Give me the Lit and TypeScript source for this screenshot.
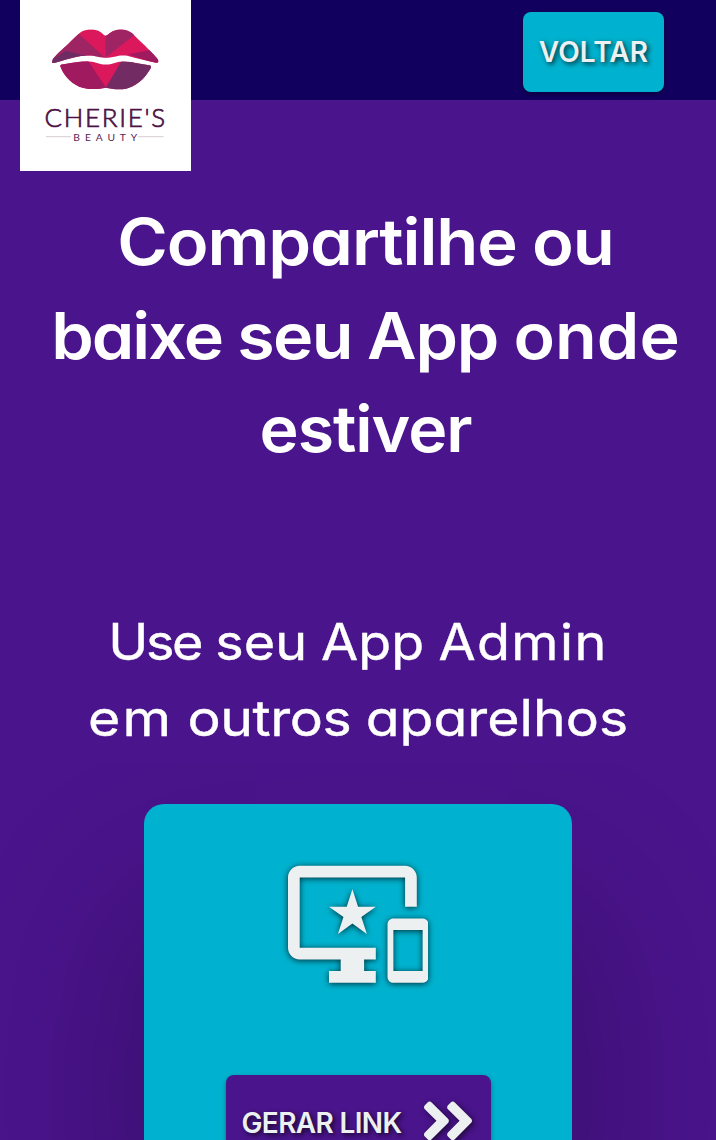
import { LitElement, html, css, svg } from "lit";
import { customElement } from "lit/decorators.js";

@customElement("brand-logo")
class BrandLogo extends LitElement {
  static styles = css`
    :host { display: block; background: #fff; }
    .art { display: block; width: 100%; height: 100%; }
    .name { font: 300 26px Lato, sans-serif; fill: #4d1245; stroke: #4d1245; stroke-width: .7px; }
    .tag { font: 400 10.3px Lato, sans-serif; fill: #5b2455; }
  `;
  render() {
    const facets = svg`
      <g clip-path="url(#upper)">
        <rect x="30" y="28" width="110" height="36" fill="#dc185c"/>
        <path d="M28 66L30 50L47 49.5L64 55L85 58L75 66Z" fill="#6f2c63"/>
        <path d="M28 62L58.500 33.500L85 57.500L63 55L46 50.500Z" fill="#9f2463"/>
        <path d="M85.300 35L100 26L120 30L112.500 36L85.300 57.500Z" fill="#9f2463"/>
        <path d="M108 54L132 49.500L142 66Z" fill="#a01a60"/>
      </g>
      <g clip-path="url(#lower)">
        <rect x="36" y="58" width="100" height="34" fill="#dc185c"/>
        <path d="M36 60L67.500 60L86 87.500L78 94H36Z" fill="#a01a60"/>
        <path d="M103 58L85.500 87.500L94 94H138V58Z" fill="#732c63"/>
      </g>`;
    return html`
      <svg class="art" viewBox="0 0 171 171">
        <defs>
          <clipPath id="upper">
            <path d="M32 60.500C33 57 40 51 46 45.500C52 40 57 34 62 31C67 28.500 75 28.500 79 31C82 32.500 83 35 85.300 35.500C88 35 90 32 94 30.500C100 28 107 29 112 33C120 41 130 50 136 57C139 60 139 62.500 136 62.500C127 61 117 58 107 55.500C99 54 94 57.500 85.300 57.500C77 57.500 75 54.500 65 55.500C54 56 43 60.500 34 62.800C31.500 63 31.500 62 32 60.500Z"/>
          </clipPath>
          <clipPath id="lower">
            <path d="M40 66C39.500 64.500 42 64 45 63.800C54 62.500 62 60.500 70 61.200C77 62 80 65 88 64.200C94 63.500 97 61 104 61.200C113 61.500 121 64 129 65C132 65.500 131 67 130 69C124 79 116 86 106 88.500C98 90 91 88.500 85.500 87.500C78 89 68 90 59 86.500C49 82 43 74 40 66Z"/>
          </clipPath>
        </defs>
        <g transform="translate(.4 .4)">${facets}</g>
        <text class="name" x="24.500" y="127.300" textLength="121">CHERIE'S</text>
        <text class="tag" x="53.500" y="141" textLength="64">BEAUTY</text>
        <path d="M26 137H51M118.500 137H144" stroke="#ddd5dc" stroke-width="1.300"/>
      </svg>`;
  }
}

@customElement("app-root")
class AppRoot extends LitElement {
  static styles = css`
    :host {
      display: block; height: 1140px; overflow: hidden; background: #4a148c;
      color: #fff; font-family: Inter, sans-serif; font-feature-settings: "cv11";
    }
    * { box-sizing: border-box; }
    .bar {
      position: relative; height: 100px; background: #12005e;
      display: flex; justify-content: flex-end; padding: 12px 52px 0 0;
    }
    .logo { position: absolute; left: 20px; top: 0; width: 170.600px; height: 170.600px; }
    .btn {
      display: flex; align-items: center; border: 0; border-radius: 8px; color: #ecf0f1;
      font: 600 28px Inter, sans-serif; text-shadow: 2px 2px 5px rgba(0,0,0,.75);
      box-shadow: 0 2px 5px rgba(0,0,0,.35); white-space: nowrap; margin: 0;
    }
    .back { width: 141px; height: 80px; padding: 0; justify-content: center; background: #00b2cf; }
    .back span { letter-spacing: .1px; }
    .title {
      margin: 95px 0 0 15px; text-align: center; font-size: 64px; font-weight: 600;
      line-height: 93.500px;
    }
    .line { display: block; white-space: nowrap; letter-spacing: -1px; word-spacing: -1px; }
    .t1 { transform: scaleX(1.073); }
    .t2 { transform: scaleX(1.065); }
    .t3 { transform: scaleX(1.034); }
    .baixe { letter-spacing: -1.800px; }
    .seu { letter-spacing: -1.500px; }
    .onde { letter-spacing: .1px; }
    .sub { margin: 128px 0 0; text-align: center; font-weight: 400; font-size: 50px; line-height: 76.500px; -webkit-text-stroke: .4px #fff; }
    .sub .line { letter-spacing: 0; }
    .use { letter-spacing: -2.200px; }
    .admin { letter-spacing: 1.300px; }
    .em { letter-spacing: 2px; }
    .outros { letter-spacing: -.4px; }
    .s1 { transform: scaleX(1.078); }
    .s2 { transform: scaleX(1.107); }
    .card {
      width: 428px; height: 560px; margin: 47px auto 0; padding-top: 50.500px; background: #00b2cf;
      border-radius: 20px; box-shadow: 0 110px 175px rgba(0,0,0,.32);
      display: flex; flex-direction: column; align-items: center;
    }
    .devices { display: block; width: 140.500px; height: 140.500px; filter: drop-shadow(0 1px 3px rgba(0,0,0,.75)); }
    .go { margin-top: 80px; width: 265px; height: 92px; padding: 0 16px; justify-content: space-between; background: #4a148c; }
    .go span { padding-top: 5px; letter-spacing: -.65px; }
    .chev { width: 54px; height: 61.700px; filter: drop-shadow(2px 2px 3px rgba(0,0,0,.6)); }
  `;
  render() {
    return html`
      <header class="bar">
        <brand-logo class="logo"></brand-logo>
        <button class="btn back"><span>VOLTAR</span></button>
      </header>
      <h1 class="title">
        <span class="line t1">Compartilhe ou</span>
        <span class="line t2"><span class="baixe">baixe</span> <span class="seu">seu</span> App <span class="onde">onde</span></span>
        <span class="line t3">estiver</span>
      </h1>
      <h2 class="sub">
        <span class="line s1"><span class="use">Use</span> seu App <span class="admin">Admin</span></span>
        <span class="line s2"><span class="em">em</span> <span class="outros">outros</span> aparelhos</span>
      </h2>
      <section class="card">
        <svg class="devices" viewBox="0 0 24 24" fill="#ecf0f1">
          <path d="M23 11.010L18 11c-.55 0-1 .45-1 1v9c0 .55.45 1 1 1h5c.55 0 1-.45 1-1v-9c0-.55-.45-.99-1-.99zM23 20h-5v-7h5v7zM20 2H2C.89 2 0 2.890 0 4v12c0 1.100.89 2 2 2h7v2H7v2h8v-2h-2v-2h2v-2H2V4h18v5h2V4c0-1.110-.9-2-2-2zm-8.030 7L11 6l-.97 3H7l2.470 1.760-.94 2.910 2.470-1.800 2.470 1.800-.94-2.910L15 9h-3.030z"/>
        </svg>
        <button class="btn go">
          <span>GERAR LINK</span>
          <svg class="chev" viewBox="0 0 448 512" fill="#ecf0f1">
            <path d="M224.300 273l-136 136c-9.400 9.400-24.600 9.400-33.900 0l-22.600-22.600c-9.400-9.400-9.400-24.600 0-33.900l96.400-96.400-96.400-96.400c-9.400-9.400-9.400-24.600 0-33.900L54.300 103c9.400-9.400 24.600-9.400 33.900 0l136 136c9.500 9.400 9.500 24.600.1 34zm192-34l-136-136c-9.400-9.400-24.600-9.400-33.900 0l-22.600 22.600c-9.400 9.400-9.400 24.600 0 33.900l96.400 96.400-96.400 96.400c-9.400 9.400-9.400 24.600 0 33.900l22.600 22.600c9.400 9.400 24.600 9.400 33.900 0l136-136c9.400-9.200 9.400-24.400 0-33.800z"/>
          </svg>
        </button>
      </section>`;
  }
}
